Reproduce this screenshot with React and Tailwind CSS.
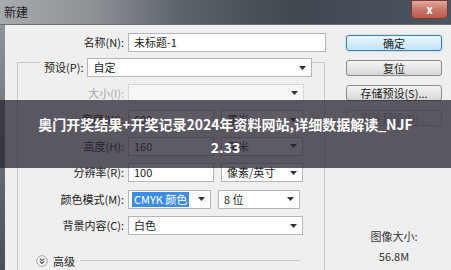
import React from 'react';

const Arrow = () => (
  <svg width="7" height="4" viewBox="0 0 7 4" className="shrink-0">
    <path d="M0 0h7L3.5 4z" fill="#333" />
  </svg>
);

const Field = ({ w, children, arrow, disabled }) => (
  <div
    className={`h-[19px] ${w} flex items-center border ${
      disabled ? 'border-[#d5d8db] bg-[#f6f6f6]' : 'border-[#b3b7bc] bg-white'
    } pl-[5px] pr-[5px]`}
  >
    <span className="flex-1 whitespace-nowrap leading-[17px]">{children}</span>
    {arrow && <Arrow />}
  </div>
);

const Row = ({ label, disabled, children }) => (
  <div className="flex items-center h-[19px]">
    <span className={`w-[110px] text-right pr-[4px] leading-[17px] ${disabled ? 'text-[#a8a8a8]' : 'text-[#222]'}`}>{label}</span>
    <div className="flex items-center gap-[7px]">{children}</div>
  </div>
);

const Button = ({ children, variant }) => {
  const styles = {
    primary: 'border-[#3c7fb1] bg-gradient-to-b from-[#eaf6fd] to-[#bfe3f7] shadow-[0_0_2px_#7ec4ea] text-[#222]',
    normal: 'border-[#8a8a8a] bg-gradient-to-b from-[#f4f4f4] to-[#d8d8d8] text-[#222]',
    disabled: 'border-[#b8bcc0] bg-[#f2f2f2] text-[#a6a6a6]',
  };
  return (
    <div className={`w-[96px] h-[16px] rounded-[3px] border flex items-center justify-center leading-[14px] ${styles[variant]}`}>
      {children}
    </div>
  );
};

export default function App() {
  return (
    <div className="relative w-[451px] h-[270px] overflow-hidden bg-[#efefef] font-['Noto_Sans_CJK_SC','Noto_Sans',sans-serif] text-[11px] text-[#222]">
      {/* title bar */}
      <div className="h-[25px] flex items-start bg-[linear-gradient(90deg,#a7abaf_0%,#8d9297_20%,#5c636a_40%,#3f474f_65%,#4c565f_100%)] border-b border-[#6a7076]">
        <span className="pl-[4px] pt-[4px] text-[12px] leading-[16px] text-[#1c1c1c]">新建</span>
        <div className="ml-auto mr-[3px] w-[37px] h-[19px] rounded-b-[4px] border border-[#7a3a34] bg-gradient-to-b from-[#e0a9a0] via-[#c9776b] to-[#b85a4d] flex items-center justify-center">
          <span className="text-white font-bold text-[11px] leading-none">x</span>
        </div>
      </div>

      <div className="flex h-[245px]">
        <div className="w-[5px] bg-gradient-to-b from-[#8f9499] to-[#4a4f55]" />

        {/* form */}
        <div className="w-[325px] flex flex-col">
          <div className="mt-[8px] flex items-center h-[19px]">
            <span className="w-[123px] text-right pr-[4px] leading-[17px]">名称(N):</span>
            <Field w="w-[198px]">未标题-1</Field>
          </div>

          <div className="mt-[10px] ml-[12px] w-[308px] flex-1 border-t border-l border-r border-[#c8c8c8]">
            <div className="-mt-[5px] flex items-center h-[19px]">
              <span className="ml-[22px] pl-[4px] pr-[4px] bg-[#efefef] leading-[17px]">预设(P):</span>
              <Field w="w-[225px]" arrow>自定</Field>
            </div>

            <div className="mt-[6.5px] flex flex-col gap-[7.5px]">
              <Row label="大小(I):" disabled>
                <Field w="w-[176px]" arrow disabled />
              </Row>
              <Row label="宽度(W):">
                <Field w="w-[86px]">600</Field>
                <Field w="w-[82px]" arrow>厘米</Field>
              </Row>
              <Row label="高度(H):">
                <Field w="w-[86px]">160</Field>
                <Field w="w-[82px]" arrow>厘米</Field>
              </Row>
              <Row label="分辨率(R):">
                <Field w="w-[86px]">100</Field>
                <Field w="w-[82px]" arrow>像素/英寸</Field>
              </Row>
              <Row label="颜色模式(M):">
                <div className="h-[19px] w-[83px] flex items-center border border-[#b3b7bc] bg-white pl-[3px] pr-[5px]">
                  <span className="flex-1">
                    <span className="inline-block bg-[#3d8ee0] text-white px-[2px] leading-[15px]">CMYK 颜色</span>
                  </span>
                  <Arrow />
                </div>
                <Field w="w-[82px]" arrow>8 位</Field>
              </Row>
              <Row label="背景内容(C):">
                <Field w="w-[175px]" arrow>白色</Field>
              </Row>
            </div>

            <div className="mt-[17.5px] flex items-center h-[16px] pl-[18px] pr-[24px]">
              <svg width="12" height="12" viewBox="0 0 12 12" className="shrink-0">
                <circle cx="6" cy="6" r="5.3" fill="#f7f7f7" stroke="#9a9a9a" strokeWidth="0.9" />
                <path d="M3.8 3.6L6 5.6L8.2 3.6M3.8 6.4L6 8.4L8.2 6.4" fill="none" stroke="#444" strokeWidth="1.1" />
              </svg>
              <span className="ml-[5px] leading-[16px]">高级</span>
              <div className="flex-1 ml-[5px] border-t border-[#c8c8c8]" />
            </div>
          </div>
        </div>

        {/* buttons */}
        <div className="flex-1 flex flex-col pl-[16px]">
          <div className="mt-[10px] flex flex-col gap-[9px]">
            <Button variant="primary">确定</Button>
            <Button variant="normal">复位</Button>
            <Button variant="normal">存储预设(S)...</Button>
            <Button variant="disabled">删除预设(D)...</Button>
          </div>
          <div className="mt-[100px] w-[96px] flex flex-col items-center text-[#333] leading-[20px]">
            <span>图像大小:</span>
            <span>56.8M</span>
          </div>
        </div>
      </div>

      {/* overlay banner */}
      <div className="absolute left-0 top-[100px] w-full h-[68px] bg-[rgba(40,36,48,0.75)] flex flex-col items-center pt-[13px] text-white font-bold text-[14px] leading-[23px]">
        <span>奥门开奖结果+开奖记录2024年资料网站,详细数据解读_NJF</span>
        <span>2.33</span>
      </div>
    </div>
  );
}
